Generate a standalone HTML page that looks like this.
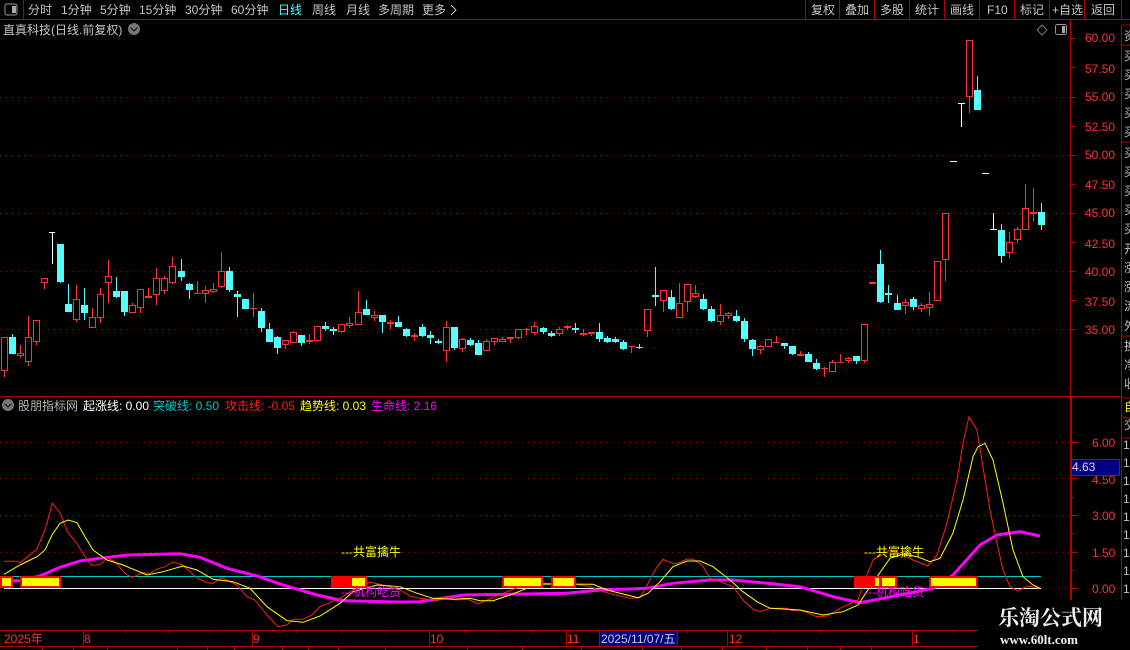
<!DOCTYPE html>
<html><head><meta charset="utf-8"><style>
html,body{margin:0;padding:0;background:#000;width:1130px;height:650px;overflow:hidden}
svg{display:block;font-family:"Liberation Sans","WenQuanYi Zen Hei","Noto Sans CJK SC",sans-serif;font-size:12px}
</style></head><body>
<svg width="1130" height="650" viewBox="0 0 1130 650" xmlns="http://www.w3.org/2000/svg">
<rect width="1130" height="650" fill="#000"/>
<!-- chrome lines -->
<g stroke="#b40000" fill="none" shape-rendering="crispEdges">
<path d="M0 19.5H1130M0 396.5H1122M23.5 0V19M805.5 0V19M839.5 0V19M874.5 0V19M909.5 0V19M944.5 0V19M979.5 0V19M1014.5 0V19M1049.5 0V19M1084.5 0V19M1121.5 0V19"/>
<path d="M1070.5 19V397M1121.5 25V600M1121.5 25H1130M1121.5 45H1130M1121.5 142H1130M1121.5 336H1130M1121.5 398H1130M1121.5 418H1130M1121.5 438H1130"/>
<path d="M1071 397V600" stroke-width="2"/>
<path d="M1070 38.5h6M1070 67.5h6M1070 97.5h6M1070 126.5h6M1070 155.5h6M1070 184.5h6M1070 213.5h6M1070 242.5h6M1070 271.5h6M1070 300.5h6M1070 329.5h6"/>
<path d="M1070 442.5h8M1070 460.5h4M1070 478.5h8M1070 497.5h4M1070 515.5h8M1070 533.5h4M1070 552.5h8M1070 570.5h4M1070 588.5h8"/>
<path d="M0 630.5H978M0 646.5H978M83.5 630V646M252.5 630V646M429.5 630V646M566.5 630V646M599.5 630V646M677.5 630V646M727.5 630V646M912.5 630V646"/>
<path d="M125.5 630v3M168.5 630v3M210.5 630v3M296.5 630v3M341.5 630v3M386.5 630v3M464.5 630v3M498.5 630v3M532.5 630v3M633.5 630v3M687.5 630v3M773.5 630v3M820.5 630v3M866.5 630v3M953.5 630v3"/>
<path d="M42.5 646v4M73.5 646v4M107.5 646v4M177.5 646v4M207.5 646v4M234.5 646v4M282.5 646v4M308.5 646v4M338.5 646v4M385.5 646v4M467.5 646v4M522.5 646v4M581.5 646v4M642.5 646v4M681.5 646v4M722.5 646v4M766.5 646v4M807.5 646v4M840.5 646v4M871.5 646v4"/>
</g>
<!-- dotted grid -->
<g stroke="#8c0000" stroke-dasharray="1 5" shape-rendering="crispEdges">
<path d="M0 97.5H1070M0 155.5H1070M0 213.5H1070M0 271.5H1070M0 329.5H1070"/>
<path d="M0 442.5H1070M0 478.5H1070M0 515.5H1070M0 552.5H1070M1040 588.5H1070"/>
</g>
<!-- toolbar -->
<rect x="5" y="4" width="12" height="11" rx="2" fill="#000" stroke="#999"/><rect x="12" y="6" width="4" height="7" fill="#aaa"/>
<g fill="#c6c6c6">
<text x="28" y="14">分时</text><text x="61" y="14">1分钟</text><text x="100" y="14">5分钟</text><text x="139" y="14">15分钟</text><text x="185" y="14">30分钟</text><text x="231" y="14">60分钟</text>
<text x="278" y="14" fill="#54ffff">日线</text><text x="312" y="14">周线</text><text x="346" y="14">月线</text><text x="378" y="14">多周期</text><text x="422" y="14">更多</text>
<path d="M451 5l5 5-5 5" fill="none" stroke="#c6c6c6"/>
<text x="811" y="14">复权</text><text x="845" y="14">叠加</text><text x="880" y="14">多股</text><text x="915" y="14">统计</text><text x="950" y="14">画线</text><text x="987" y="14">F10</text><text x="1020" y="14">标记</text><text x="1052" y="14">+自选</text><text x="1091" y="14">返回</text>
<text x="3" y="34">直真科技(日线.前复权)</text>
</g>
<circle cx="134" cy="29" r="6" fill="#777"/><path d="M130.500 27.500l3.500 3.500 3.500-3.500" fill="none" stroke="#222" stroke-width="1.300"/>
<path d="M1042 25l5 5-5 5-5-5z" fill="none" stroke="#777"/>
<rect x="1055.500" y="24.500" width="11" height="10" rx="2" fill="#000" stroke="#999"/><rect x="1062" y="26" width="3" height="7" fill="#aaa"/>
<!-- price labels -->
<g fill="#ff3232">
<text x="1085" y="42">60.00</text><text x="1085" y="73">57.50</text><text x="1085" y="101">55.00</text><text x="1085" y="131">52.50</text><text x="1085" y="159">50.00</text><text x="1085" y="189">47.50</text><text x="1085" y="217">45.00</text><text x="1085" y="248">42.50</text><text x="1085" y="276">40.00</text><text x="1085" y="306">37.50</text><text x="1085" y="334">35.00</text>
<text x="1092" y="447">6.00</text><text x="1092" y="484">4.50</text><text x="1092" y="520">3.00</text><text x="1092" y="557">1.50</text><text x="1092" y="593">0.00</text>
</g>
<rect x="1071.500" y="459.500" width="48" height="16" fill="#000080" stroke="#b40000"/><text x="1072" y="471" fill="#d8d8f0">4.63</text>
<!-- right strip -->
<g fill="#c0c0c0">
<text x="1124" y="40">资</text><text x="1124" y="60">买</text><text x="1124" y="79">买</text><text x="1124" y="98">买</text><text x="1124" y="117">买</text><text x="1124" y="136">买</text><text x="1124" y="157">买</text><text x="1124" y="176">买</text><text x="1124" y="195">买</text><text x="1124" y="214">买</text><text x="1124" y="233">买</text><text x="1124" y="253">开</text><text x="1124" y="272">涨</text><text x="1124" y="291">涨</text><text x="1124" y="310">流</text><text x="1124" y="330">外</text><text x="1124" y="350">换</text><text x="1124" y="369">净</text><text x="1124" y="388">收</text>
<text x="1124" y="429">交</text>
<text x="1123" y="449">1</text><text x="1123" y="467">1</text><text x="1123" y="485">1</text><text x="1123" y="503">1</text><text x="1123" y="521">1</text><text x="1123" y="539">1</text><text x="1123" y="557">1</text><text x="1123" y="575">1</text><text x="1123" y="593">1</text>
</g>
<text x="1124" y="411" fill="#ffff00">自</text>
<!-- candles -->
<g fill="none" shape-rendering="crispEdges">
<path stroke="#ff3232" d="M4.500 337V377M20.500 345V358M28.500 316V366M36.500 320V345M44.500 278V289M76.500 285V322M92.500 308V328M100.500 288V323M108.500 260V303M132.500 303V313M140.500 289V313M148.500 288V298M156.500 268V305M164.500 276V294M172.500 257V284M197.500 281V294M205.500 286V303M213.500 283V293M221.500 252V288M253.500 293V317M285.500 340V349M293.500 331V343M309.500 334V344M317.500 326V341M341.500 324V333M349.500 317V328M358.500 291V325M374.500 311V321M390.500 320V329M414.500 333V341M446.500 321V362M462.500 338V352M486.500 339V351M494.500 338V345M502.500 337V342M510.500 337V343M518.500 329V339M526.500 328V335M534.500 322V335M559.500 327V336M567.500 325V330M583.500 329V336M591.500 332V336M631.500 346V353M647.500 309V337M663.500 290V312M679.500 283V318M687.500 284V312M695.500 285V298M720.500 304V325M728.500 312V319M760.500 345V354M776.500 336V343M800.500 351V356M824.500 367V377M832.500 360V372M840.500 354V363M848.500 357V363M864.500 324V363M905.500 299V314M921.500 303V312M929.500 292V316M937.500 261V301M945.500 213V281M969.500 40V113M1009.500 232V258M1017.500 227V243M1025.500 184V230M1033.500 188V222"/>
<path stroke="#ff3232" fill="#000" d="M1.500 337.500h6V370.500h-6zM17.500 353.500h6V355.500h-6zM25.500 337.500h6V361.500h-6zM33.500 320.500h6V341.500h-6zM41.500 278.500h6V282.500h-6zM73.500 299.500h6V319.500h-6zM89.500 317.500h6V327.500h-6zM97.500 294.500h6V317.500h-6zM105.500 276.500h6V282.500h-6zM129.500 305.500h6V312.500h-6zM137.500 289.500h6V307.500h-6zM153.500 278.500h6V294.500h-6zM161.500 278.500h6V290.500h-6zM169.500 266.500h6V282.500h-6zM202.500 290.500h6V293.500h-6zM210.500 289.500h6V291.500h-6zM218.500 271.500h6V286.500h-6zM282.500 340.500h6V344.500h-6zM290.500 332.500h6V342.500h-6zM314.500 326.500h6V340.500h-6zM338.500 324.500h6V331.500h-6zM346.500 323.500h6V325.500h-6zM355.500 312.500h6V324.500h-6zM371.500 315.500h6V317.500h-6zM443.500 327.500h6V350.500h-6zM459.500 339.500h6V348.500h-6zM483.500 341.500h6V350.500h-6zM491.500 338.500h6V341.500h-6zM499.500 339.500h6V341.500h-6zM515.500 329.500h6V337.500h-6zM531.500 326.500h6V332.500h-6zM556.500 329.500h6V333.500h-6zM644.500 309.500h6V330.500h-6zM660.500 290.500h6V300.500h-6zM676.500 303.500h6V317.500h-6zM684.500 284.500h6V301.500h-6zM692.500 293.500h6V296.500h-6zM717.500 315.500h6V321.500h-6zM725.500 313.500h6V315.500h-6zM757.500 346.500h6V349.500h-6zM765.500 339.500h6V346.500h-6zM829.500 362.500h6V371.500h-6zM845.500 358.500h6V360.500h-6zM861.500 324.500h6V360.500h-6zM902.500 302.500h6V305.500h-6zM918.500 305.500h6V308.500h-6zM926.500 304.500h6V307.500h-6zM934.500 261.500h6V300.500h-6zM942.500 213.500h6V259.500h-6zM966.500 40.500h6V96.500h-6zM1006.500 242.500h6V252.500h-6zM1014.500 229.500h6V239.500h-6zM1022.500 208.500h6V229.500h-6z"/>
<path fill="#ff3232" d="M145 296h7v2h-7zM194 293h7v1h-7zM250 308h7v1h-7zM306 340h7v2h-7zM387 322h7v2h-7zM411 335h7v2h-7zM507 337h7v2h-7zM523 329h7v1h-7zM564 326h7v2h-7zM580 333h7v2h-7zM588 332h7v2h-7zM628 346h7v1h-7zM773 342h7v1h-7zM797 354h7v2h-7zM821 368h7v1h-7zM837 362h7v1h-7zM869 282h7v2h-7zM1030 212h7v2h-7z"/>
<path stroke="#54ffff" d="M12.500 334V354M60.500 244V283M68.500 284V304M84.500 288V320M116.500 277V298M124.500 291V316M181.500 259V281M189.500 283V299M229.500 267V292M237.500 291V317M261.500 308V332M269.500 323V329M277.500 336V354M301.500 335V346M325.500 322V331M333.500 327V335M366.500 300V309M382.500 322V333M398.500 316V322M406.500 328V337M422.500 324V337M430.500 331V344M438.500 339V344M454.500 327V350M470.500 338V346M478.500 340V343M543.500 327V334M551.500 331V337M575.500 323V333M599.500 323V342M607.500 336V343M615.500 337V343M623.500 340V350M639.500 344V349M655.500 267V306M671.500 290V310M703.500 294V310M711.500 306V322M736.500 310V322M744.500 318V342M752.500 339V356M784.500 346V349M792.500 354V355M808.500 352V362M816.500 359V370M856.500 361V364M880.500 250V303M888.500 285V303M897.500 295V310M913.500 297V310M977.500 76V110M1001.500 224V263M1041.500 203V230"/>
<path fill="#54ffff" d="M9 337h7V354h-7zM57 244h7V282h-7zM65 304h7V312h-7zM81 305h7V313h-7zM113 291h7V297h-7zM121 291h7V312h-7zM178 271h7V277h-7zM186 284h7V290h-7zM226 271h7V290h-7zM234 294h7V297h-7zM242 299h7V309h-7zM258 311h7V328h-7zM266 329h7V342h-7zM274 337h7V348h-7zM298 335h7V343h-7zM322 326h7V329h-7zM330 329h7V331h-7zM363 309h7V315h-7zM379 315h7V322h-7zM395 322h7V327h-7zM403 329h7V336h-7zM419 327h7V336h-7zM427 335h7V338h-7zM435 341h7V343h-7zM451 327h7V348h-7zM467 340h7V345h-7zM475 343h7V355h-7zM540 328h7V332h-7zM548 333h7V336h-7zM572 328h7V330h-7zM596 332h7V339h-7zM604 338h7V342h-7zM612 339h7V342h-7zM620 342h7V349h-7zM636 347h7V348h-7zM652 295h7V297h-7zM668 297h7V309h-7zM700 299h7V309h-7zM708 309h7V321h-7zM733 316h7V321h-7zM741 321h7V339h-7zM749 340h7V349h-7zM781 343h7V346h-7zM789 346h7V354h-7zM805 354h7V362h-7zM813 363h7V369h-7zM853 356h7V361h-7zM877 264h7V302h-7zM885 293h7V295h-7zM894 303h7V310h-7zM910 299h7V307h-7zM974 90h7V110h-7zM998 230h7V256h-7zM1038 212h7V225h-7z"/>
<path stroke="#fff" d="M52.500 232V264M49 232.500h6M950 161.500h7M961.500 104V127M958 103.500h7M982 173.500h7M993.500 213V229M990 229.500h7"/>
</g>
<!-- indicator legend -->
<circle cx="8" cy="405" r="6" fill="#777"/><path d="M4.500 403.500l3.500 3.500 3.500-3.500" fill="none" stroke="#222" stroke-width="1.300"/>
<text x="18" y="410" fill="#b4b4b4">股朋指标网</text>
<text x="83" y="410" fill="#fff">起涨线: 0.00</text>
<text x="153" y="410" fill="#00c8c8">突破线: 0.50</text>
<text x="225" y="410" fill="#ff1e1e">攻击线: -0.05</text>
<text x="300" y="410" fill="#ffff00">趋势线: 0.03</text>
<text x="371" y="410" fill="#ff00ff">生命线: 2.16</text>
<!-- indicator lines -->
<g fill="none">
<path d="M0 576.500H1041" stroke="#00c8c8" stroke-width="1" shape-rendering="crispEdges"/>
<path d="M4 588.500H1041" stroke="#fff" stroke-width="1" shape-rendering="crispEdges"/>
<path stroke="#ff00ff" stroke-width="3" d="M13 580.700L20 580.700L40 576L60 567.300L80 561L100 558.300L127 555L180 553.700L200 557.300L227 568.300L257 576L283 585L317 595L343 600.700L400 602L420 601.700L463 595L567 593.300L600 590L647 588.300L673 583.300L710 580L733 580L767 583.300L800 586.700L833 596.700L860 602.700L883 598.300L933 588.300L953 575L980 545L997 535L1020 531.700L1040 536"/>
<path stroke="#ff1e1e" d="M4 561.300L16.700 561.300L20 562.700L36.700 549.300L45 530L52.300 503.300L60 512.700L68 533L76.700 543L87 560L91.700 565.300L100 564.700L107 558L115 561.700L125 573.300L132 577.300L143 572.700L150 573.300L158 568.700L165 566.700L173 562L182 564.700L188 570L197 578L207 582.700L213 583.300L222 577.700L237 585L247 596.700L255 600L267 615L278 626.700L287 625L293 619.300L303 619.300L312 615L320 606.700L340 598.300L353 590L370 582.300L383 585L400 590L410 596L420 598.300L437 600.700L447 596L455 600L468 599.300L478 604L495 596.700L513 589.300L527 585L543 583.300L577 584.300L590 586.700L603 591.700L620 596L630 598.300L640 597.700L648 583.300L655 570L663 559.300L672 563.300L678 563.300L687 559L693 559.300L702 565L710 578.300L720 581.700L733 586.700L743 600L753 609.300L760 611.700L770 608.300L787 608.300L792 610.700L800 610L817 616.700L827 616L840 608.300L858 600L865 580L873 560L882 555L890 550L903 555L913 560L928 566L937 555L947 523L957 480L963 443L969 416.700L977 430L983 467L990 510L997 543L1003 570L1010 586.700L1018 591L1027 586L1040 588.300"/>
<path stroke="#ffff00" d="M4 574.300L20 565L37 556.700L45 550L52 535L60 523.300L68 520L77 522.700L85 536.700L93 550L107 560L123 565L147 575L163 571.700L183 566L197 570L213 579.300L233 581.700L250 588.300L267 606.700L287 620.700L303 622.300L320 616L340 603.300L353 591.700L377 585L400 586.700L417 593.300L433 598.300L453 599.300L470 598.300L480 600.700L493 600.700L510 595L527 588.300L543 584L593 584.300L607 590L627 595L638 597.700L648 593.300L660 581.700L673 566.700L687 561L700 561L713 566.700L730 580L743 591.700L757 601.700L770 608.300L800 610L823 615L843 611.700L858 605L870 586.700L890 558.300L903 554L917 556.700L930 561.700L940 558.300L953 533L963 500L973 456.700L978 446.700L985 443.300L993 460L1003 503L1013 550L1023 576.700L1033 585L1040 588.300"/>
</g>
<!-- boxes -->
<g shape-rendering="crispEdges">
<g fill="#ffff00" stroke="#ff0000" stroke-width="2">
<rect x="1" y="577" width="11" height="10"/><rect x="21" y="577" width="39" height="10"/><rect x="332" y="577" width="34" height="10"/><rect x="503" y="577" width="39" height="10"/><rect x="552" y="577" width="23" height="10"/><rect x="855" y="577" width="25" height="10"/><rect x="881" y="577" width="15" height="10"/><rect x="930" y="577" width="47" height="10"/>
</g>
<rect x="331" y="576" width="21" height="11" fill="#ff0000"/><rect x="854" y="576" width="21" height="11" fill="#ff0000"/>
</g>
<text x="341" y="556" fill="#ffff00">---共富擒牛</text><text x="864" y="556" fill="#ffff00">---共富擒牛</text>
<text x="341" y="596" fill="#ff00ff">---机构吃货</text><text x="864" y="596" fill="#ff00ff">---机构吃货</text>
<!-- time axis -->
<rect x="600" y="631" width="77" height="15" fill="#000080"/>
<g fill="#ff3232"><text x="4" y="643">2025年</text><text x="84" y="643">8</text><text x="253" y="643">9</text><text x="430" y="643">10</text><text x="567" y="643">11</text><text x="729" y="643">12</text><text x="913" y="643">1</text></g>
<text x="601" y="643" fill="#c8c8e6">2025/11/07/五</text>
<!-- watermark -->
<rect x="978" y="601" width="152" height="49" fill="#000"/>
<text x="998" y="625" fill="#f0f0f0" font-size="21" font-weight="bold" style="font-family:'Noto Serif CJK SC','Liberation Serif',serif">乐淘公式网</text>
<text x="1000" y="644" fill="#f0f0f0" font-size="13" font-weight="bold" style="font-family:'Liberation Serif',serif">www.60lt.com</text>
</svg>
</body></html>
